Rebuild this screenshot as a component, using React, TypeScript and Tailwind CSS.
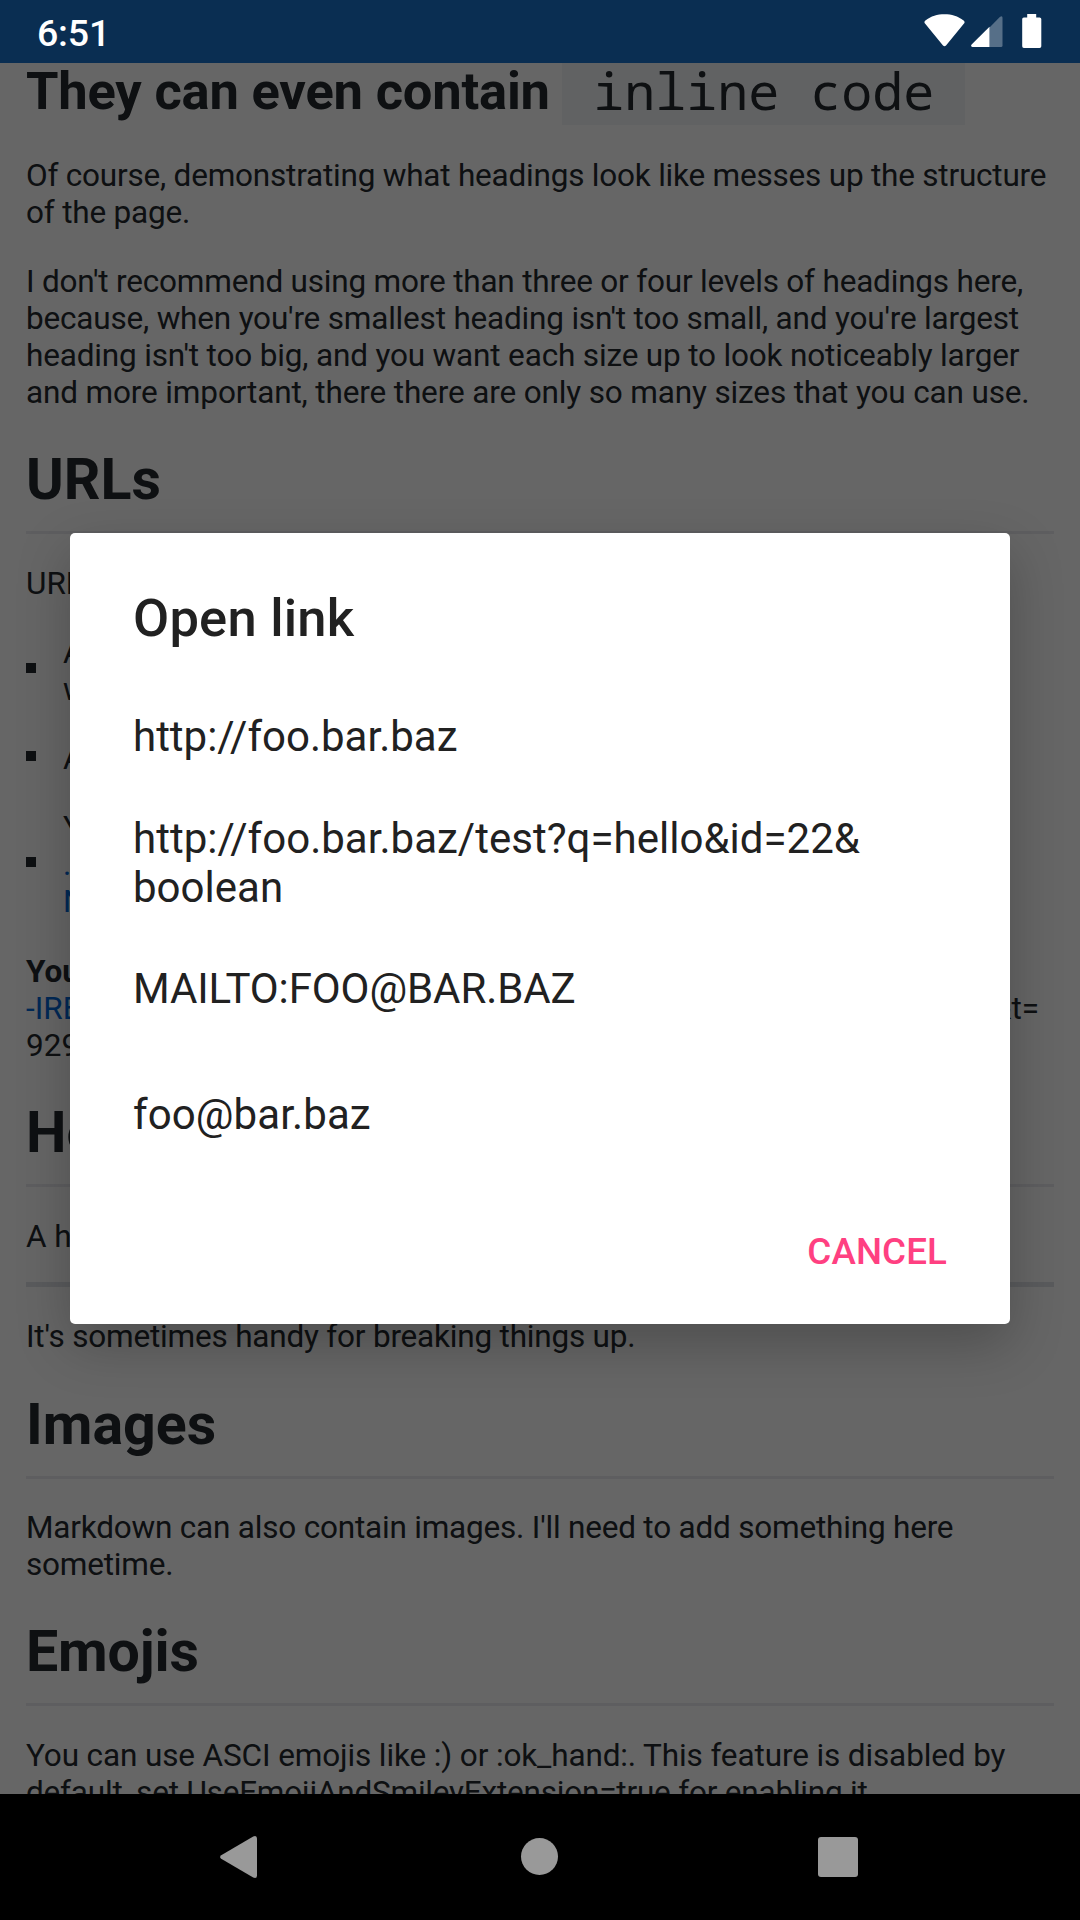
import type { ReactNode } from "react";

function Line({ children, className = "" }: { children: ReactNode; className?: string }) {
  return <p className={`whitespace-nowrap ${className}`}>{children}</p>;
}

function Heading({ children, className = "" }: { children: ReactNode; className?: string }) {
  return (
    <h1
      className={`h-[88px] border-b-3 border-[#eaecef] text-[57.3px] leading-[68px] font-bold whitespace-nowrap ${className}`}
    >
      {children}
    </h1>
  );
}

function Bullet({ children, className = "" }: { children: ReactNode; className?: string }) {
  return (
    <li className={`flex items-center ${className}`}>
      <span className="mb-1.5 size-2.5 shrink-0 bg-[#24292e]" />
      <div className="ml-[27px]">{children}</div>
    </li>
  );
}

function StatusBar() {
  return (
    <header className="flex h-[63px] shrink-0 items-start bg-[#0a2e52] pr-[38px] pl-[37px]">
      <span className="mt-[11px] text-[37.5px] leading-11 font-medium tracking-[-0.2px] text-white">6:51</span>
      <div className="mt-3.5 ml-auto flex items-start">
        <svg width="41" height="33" viewBox="0 0 41 33" fill="#fff">
          <path d="M19 31.6 1 9.6Q-.3 7.9 1.4 6.6C7 2.2 13.4.3 20.5.3S34 2.2 39.6 6.6Q41.3 7.9 40 9.6L22 31.6Q20.5 33 19 31.6Z" />
        </svg>
        <svg className="mt-0.5 ml-1.5" width="32" height="31" viewBox="0 0 32 31">
          <path d="M18.5 11.5 28.8.9Q31.5-1 31.5 1.8V29.4Q31.5 31 30 31H18.5Z" fill="#566f88" />
          <path d="M18.5 10.8V31H1.4Q-.8 30.3.6 28.4Z" fill="#fff" />
        </svg>
        <svg className="ml-[19px]" width="20" height="34" viewBox="0 0 20 34" fill="#fff">
          <path d="M5.2 0H14.2V3.4H17.6Q19.3 3.4 19.3 5.1V32.2Q19.3 34 17.6 34H1.9Q.2 34 .2 32.2V5.1Q.2 3.4 1.9 3.4H5.2Z" />
        </svg>
      </div>
    </header>
  );
}

function Article() {
  return (
    <article className="h-full overflow-hidden px-[26px] text-[31.5px] leading-[37px] text-[#24292e]">
      <h2 className="flex h-[62px] text-[52.5px] leading-[60px] font-bold tracking-[-0.2px] whitespace-pre">
        <span className="-mt-0.5">They can even contain </span>
        <code className="-ml-[0.5px] bg-[#f3f5f8] px-[31px] font-['Noto_Sans_Mono'] text-[51.7px] leading-[54px] font-normal tracking-normal">
          inline code
        </code>
      </h2>
      <Line className="mt-8 tracking-[-0.21px]">Of course, demonstrating what headings look like messes up the structure</Line>
      <Line className="tracking-[-0.2px]">of the page.</Line>
      <Line className="mt-8 tracking-[-0.19px]">I don't recommend using more than three or four levels of headings here,</Line>
      <Line className="tracking-[-0.19px]">because, when you're smallest heading isn't too small, and you're largest</Line>
      <Line className="tracking-[-0.16px]">heading isn't too big, and you want each size up to look noticeably larger</Line>
      <Line className="tracking-[-0.14px]">and more important, there there are only so many sizes that you can use.</Line>
      <Heading className="mt-[35px]">URLs</Heading>
      <Line className="mt-[31px]">URLs</Line>
      <ul>
        <Bullet className="mt-8">
          <Line>A</Line>
          <Line>w</Line>
        </Bullet>
        <Bullet className="mt-8">
          <Line>A</Line>
        </Bullet>
        <Bullet className="mt-8">
          <Line>Y</Line>
          <Line className="text-[#0366d6]">.</Line>
          <Line className="text-[#0366d6]">N</Line>
        </Bullet>
      </ul>
      <Line className="mt-[33px] font-bold">You</Line>
      <div className="flex justify-between pr-[15px]">
        <Line className="text-[#0366d6]">-IRE</Line>
        <Line>&amp;t=</Line>
      </div>
      <Line>929</Line>
      <Heading className="mt-[35px]">Ho</Heading>
      <Line className="mt-[31px]">A ho</Line>
      <hr className="mt-[27px] h-[5px] border-0 bg-[#e1e4e8]" />
      <Line className="mt-[31px] tracking-[-0.2px]">It's sometimes handy for breaking things up.</Line>
      <Heading className="mt-9">Images</Heading>
      <Line className="mt-[30px] tracking-[-0.2px]">Markdown can also contain images. I'll need to add something here</Line>
      <Line className="tracking-[-0.2px]">sometime.</Line>
      <Heading className="mt-[35px] tracking-[-0.15px]">Emojis</Heading>
      <Line className="mt-[31px] tracking-[-0.12px]">
        You can use ASCI emojis like :) or :ok_hand:. This feature is disabled by
      </Line>
      <Line className="tracking-[-0.2px]">default, set UseEmojiAndSmileyExtension=true for enabling it.</Line>
    </article>
  );
}

function LinkDialog() {
  return (
    <div
      role="dialog"
      className="mt-[470px] flex h-[791px] w-[940px] flex-col rounded-[5px] bg-white px-[63px] pt-[54px] text-[42px] leading-[49px] text-[#212121] shadow-[0_20px_54px_rgba(0,0,0,0.24)]"
    >
      <h3 className="text-[52.5px] leading-[62px] font-medium tracking-[0.22px]">Open link</h3>
      <p className="mt-[63px]">http://foo.bar.baz</p>
      <p className="mt-[53px] tracking-[0.02px]">
        http://foo.bar.baz/test?q=hello&amp;id=22&amp;
        <br />
        boolean
      </p>
      <p className="mt-[52px] tracking-[-0.1px]">MAILTO:FOO@BAR.BAZ</p>
      <p className="mt-[77px] tracking-[0.1px]">foo@bar.baz</p>
      <button className="mt-[91px] self-end text-[36.75px] leading-[43px] font-medium tracking-[0.1px] text-[#ff4081]">
        CANCEL
      </button>
    </div>
  );
}

function NavBar() {
  return (
    <nav className="flex h-[126px] shrink-0 items-center bg-black pl-[220px]">
      <svg width="37" height="42" viewBox="0 0 37 42" fill="#999">
        <path d="M1.2 19.2 33.2.5Q37-.9 37 2.6V39.4Q37 42.9 33.2 41.5L1.2 22.8Q-1 21 1.2 19.2Z" />
      </svg>
      <span className="mb-px ml-[264px] size-[37px] rounded-full bg-[#999]" />
      <span className="ml-[260px] size-10 rounded-[3px] bg-[#999]" />
    </nav>
  );
}

export default function App() {
  return (
    <div className="flex h-[1920px] w-[1080px] flex-col overflow-hidden font-[Roboto,sans-serif]">
      <StatusBar />
      <main className="relative h-[1731px] shrink-0 overflow-hidden bg-white">
        <Article />
        <div className="absolute inset-0 flex items-start justify-center bg-black/60">
          <LinkDialog />
        </div>
      </main>
      <NavBar />
    </div>
  );
}
